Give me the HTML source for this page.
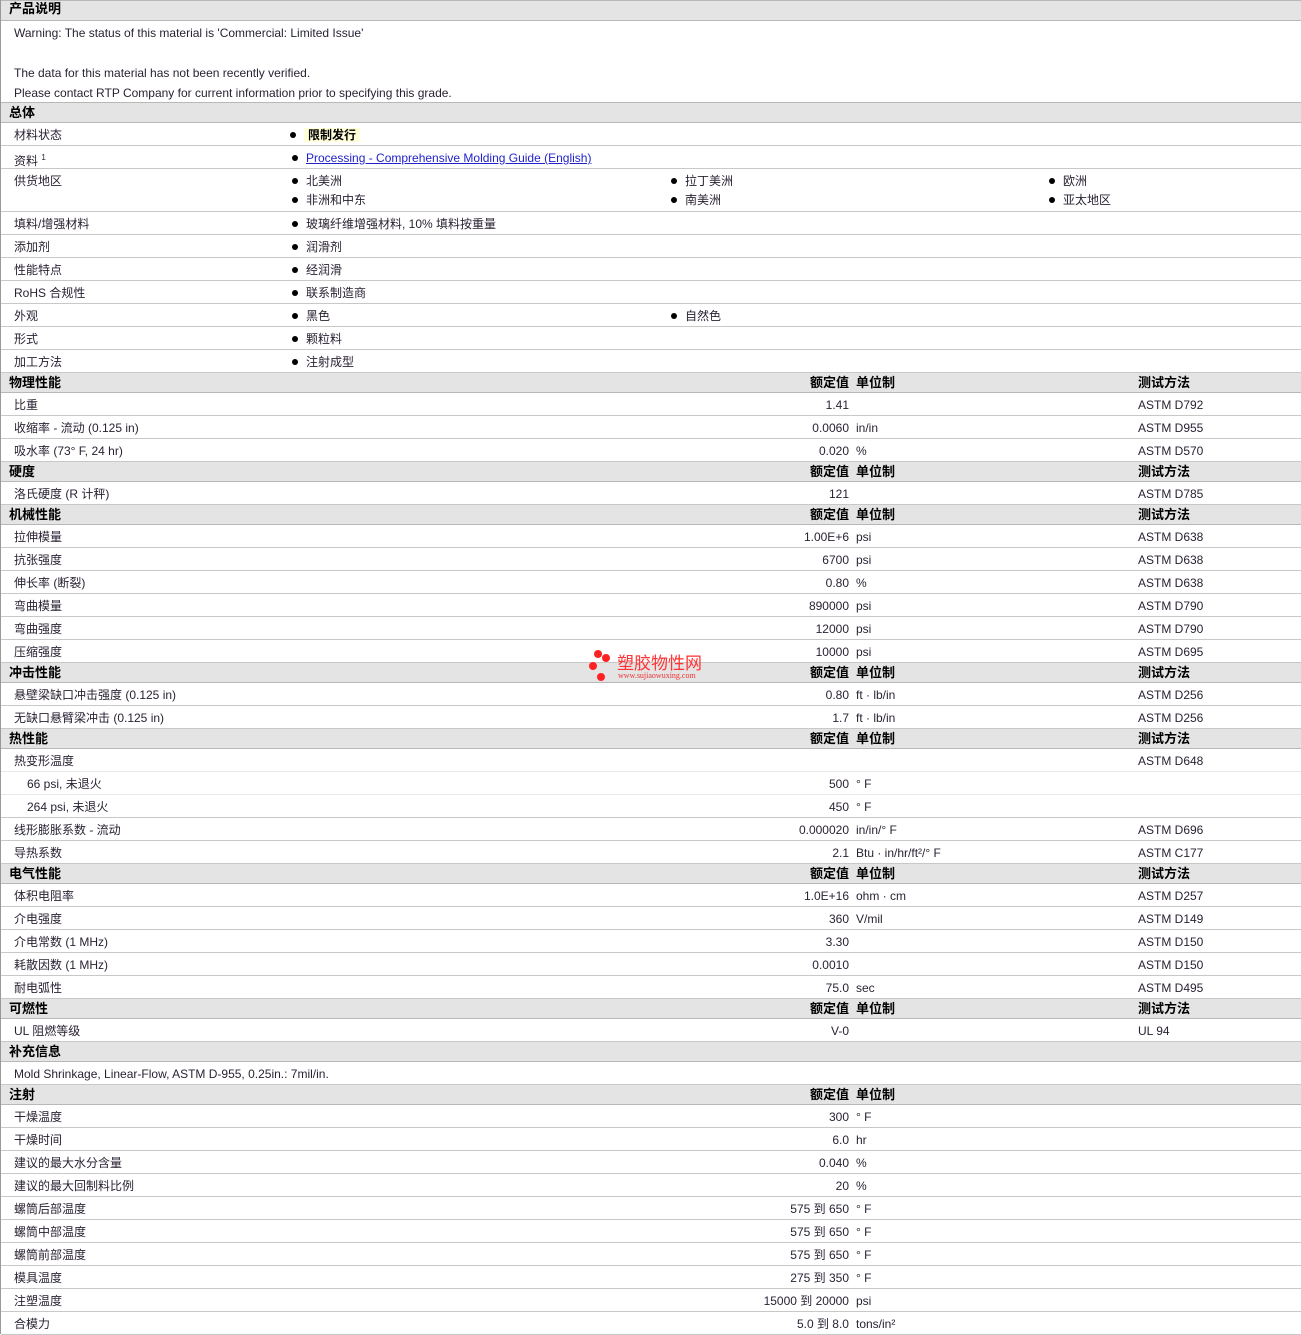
<!DOCTYPE html>
<html><head><meta charset="utf-8"><style>
*{margin:0;padding:0;box-sizing:border-box}
body{width:1301px;height:1334px;overflow:hidden;background:#fff;font-family:"Liberation Sans","Noto Sans CJK SC",sans-serif;font-size:12px;color:#2a2233;border-left:1px solid #999}
.h{height:20px;background:#e4e4e4;border-bottom:1px solid #b8b8b8;position:relative;font-weight:bold;font-size:13px;color:#000}
.r{height:23px;border-bottom:1px solid #c8c8c8;position:relative}
.r.s{border-bottom-color:#e8e8e8}
.h span,.r span{position:absolute;white-space:nowrap;line-height:14px}
.h span{top:3px}
.r span{top:5px}
.l{left:13px}.h .l{left:8px}
.b{left:290px}
.bt{left:305px}
.v{right:452px;text-align:right}
.u{left:855px}
.m{left:1137px}
.bl:before{content:"";position:absolute;left:-14px;top:4px;width:6px;height:6px;border-radius:50%;background:#000}
a{color:#2222cc;text-decoration:underline}
</style></head><body>
<div class="h" style="border-top:1px solid #b8b8b8;height:21px"><span class="l" style="top:1px">产品说明</span></div>
<div style="height:82px;position:relative;border-bottom:1px solid #b8b8b8">
<span style="position:absolute;left:13px;top:5px">Warning: The status of this material is 'Commercial: Limited Issue'</span>
<span style="position:absolute;left:13px;top:45px">The data for this material has not been recently verified.</span>
<span style="position:absolute;left:13px;top:65px">Please contact RTP Company for current information prior to specifying this grade.</span>
</div>
<div class="h"><span class="l">总体</span></div>
<div class="r"><span class="l">材料状态</span><span class="bt bl" style="background:#ffffd8;font-weight:bold;color:#000;padding:0 4px;left:303px">限制发行</span></div>
<div class="r"><span class="l">资料 <sup style="font-size:8px">1</sup></span><span class="bt bl"><a>Processing - Comprehensive Molding Guide (English)</a></span></div>
<div class="r" style="height:43px"><span class="l">供货地区</span><span class="bt bl">北美洲</span><span class="bt bl" style="top:24px">非洲和中东</span><span class="bl" style="left:684px">拉丁美洲</span><span class="bl" style="left:684px;top:24px">南美洲</span><span class="bl" style="left:1062px">欧洲</span><span class="bl" style="left:1062px;top:24px">亚太地区</span></div>
<div class="r"><span class="l">填料/增强材料</span><span class="bt bl">玻璃纤维增强材料, 10% 填料按重量</span></div>
<div class="r"><span class="l">添加剂</span><span class="bt bl">润滑剂</span></div>
<div class="r"><span class="l">性能特点</span><span class="bt bl">经润滑</span></div>
<div class="r"><span class="l">RoHS 合规性</span><span class="bt bl">联系制造商</span></div>
<div class="r"><span class="l">外观</span><span class="bt bl">黑色</span><span class="bl" style="left:684px">自然色</span></div>
<div class="r"><span class="l">形式</span><span class="bt bl">颗粒料</span></div>
<div class="r"><span class="l">加工方法</span><span class="bt bl">注射成型</span></div>

<div class="h"><span class="l">物理性能</span><span class="v">额定值</span><span class="u">单位制</span><span class="m">测试方法</span></div>
<div class="r"><span class="l">比重</span><span class="v">1.41</span><span class="m">ASTM D792</span></div>
<div class="r"><span class="l">收缩率 - 流动 (0.125 in)</span><span class="v">0.0060</span><span class="u">in/in</span><span class="m">ASTM D955</span></div>
<div class="r"><span class="l">吸水率 (73° F, 24 hr)</span><span class="v">0.020</span><span class="u">%</span><span class="m">ASTM D570</span></div>

<div class="h"><span class="l">硬度</span><span class="v">额定值</span><span class="u">单位制</span><span class="m">测试方法</span></div>
<div class="r"><span class="l">洛氏硬度 (R 计秤)</span><span class="v">121</span><span class="m">ASTM D785</span></div>

<div class="h"><span class="l">机械性能</span><span class="v">额定值</span><span class="u">单位制</span><span class="m">测试方法</span></div>
<div class="r"><span class="l">拉伸模量</span><span class="v">1.00E+6</span><span class="u">psi</span><span class="m">ASTM D638</span></div>
<div class="r"><span class="l">抗张强度</span><span class="v">6700</span><span class="u">psi</span><span class="m">ASTM D638</span></div>
<div class="r"><span class="l">伸长率 (断裂)</span><span class="v">0.80</span><span class="u">%</span><span class="m">ASTM D638</span></div>
<div class="r"><span class="l">弯曲模量</span><span class="v">890000</span><span class="u">psi</span><span class="m">ASTM D790</span></div>
<div class="r"><span class="l">弯曲强度</span><span class="v">12000</span><span class="u">psi</span><span class="m">ASTM D790</span></div>
<div class="r"><span class="l">压缩强度</span><span class="v">10000</span><span class="u">psi</span><span class="m">ASTM D695</span></div>

<div class="h"><span class="l">冲击性能</span><span class="v">额定值</span><span class="u">单位制</span><span class="m">测试方法</span></div>
<div class="r"><span class="l">悬壁梁缺口冲击强度 (0.125 in)</span><span class="v">0.80</span><span class="u">ft · lb/in</span><span class="m">ASTM D256</span></div>
<div class="r"><span class="l">无缺口悬臂梁冲击 (0.125 in)</span><span class="v">1.7</span><span class="u">ft · lb/in</span><span class="m">ASTM D256</span></div>

<div class="h"><span class="l">热性能</span><span class="v">额定值</span><span class="u">单位制</span><span class="m">测试方法</span></div>
<div class="r s"><span class="l">热变形温度</span><span class="m">ASTM D648</span></div>
<div class="r s"><span class="l" style="left:26px">66 psi, 未退火</span><span class="v">500</span><span class="u">° F</span></div>
<div class="r"><span class="l" style="left:26px">264 psi, 未退火</span><span class="v">450</span><span class="u">° F</span></div>
<div class="r"><span class="l">线形膨胀系数 - 流动</span><span class="v">0.000020</span><span class="u">in/in/° F</span><span class="m">ASTM D696</span></div>
<div class="r"><span class="l">导热系数</span><span class="v">2.1</span><span class="u">Btu · in/hr/ft²/° F</span><span class="m">ASTM C177</span></div>

<div class="h"><span class="l">电气性能</span><span class="v">额定值</span><span class="u">单位制</span><span class="m">测试方法</span></div>
<div class="r"><span class="l">体积电阻率</span><span class="v">1.0E+16</span><span class="u">ohm · cm</span><span class="m">ASTM D257</span></div>
<div class="r"><span class="l">介电强度</span><span class="v">360</span><span class="u">V/mil</span><span class="m">ASTM D149</span></div>
<div class="r"><span class="l">介电常数 (1 MHz)</span><span class="v">3.30</span><span class="m">ASTM D150</span></div>
<div class="r"><span class="l">耗散因数 (1 MHz)</span><span class="v">0.0010</span><span class="m">ASTM D150</span></div>
<div class="r"><span class="l">耐电弧性</span><span class="v">75.0</span><span class="u">sec</span><span class="m">ASTM D495</span></div>

<div class="h"><span class="l">可燃性</span><span class="v">额定值</span><span class="u">单位制</span><span class="m">测试方法</span></div>
<div class="r"><span class="l">UL 阻燃等级</span><span class="v">V-0</span><span class="m">UL 94</span></div>

<div class="h"><span class="l">补充信息</span></div>
<div class="r"><span class="l">Mold Shrinkage, Linear-Flow, ASTM D-955, 0.25in.: 7mil/in.</span></div>

<div class="h"><span class="l">注射</span><span class="v">额定值</span><span class="u">单位制</span></div>
<div class="r"><span class="l">干燥温度</span><span class="v">300</span><span class="u">° F</span></div>
<div class="r"><span class="l">干燥时间</span><span class="v">6.0</span><span class="u">hr</span></div>
<div class="r"><span class="l">建议的最大水分含量</span><span class="v">0.040</span><span class="u">%</span></div>
<div class="r"><span class="l">建议的最大回制料比例</span><span class="v">20</span><span class="u">%</span></div>
<div class="r"><span class="l">螺筒后部温度</span><span class="v">575 到 650</span><span class="u">° F</span></div>
<div class="r"><span class="l">螺筒中部温度</span><span class="v">575 到 650</span><span class="u">° F</span></div>
<div class="r"><span class="l">螺筒前部温度</span><span class="v">575 到 650</span><span class="u">° F</span></div>
<div class="r"><span class="l">模具温度</span><span class="v">275 到 350</span><span class="u">° F</span></div>
<div class="r"><span class="l">注塑温度</span><span class="v">15000 到 20000</span><span class="u">psi</span></div>
<div class="r"><span class="l">合模力</span><span class="v">5.0 到 8.0</span><span class="u">tons/in²</span></div>

<div style="position:absolute;left:589px;top:649px;width:130px;height:36px">
<div style="position:absolute;left:5px;top:1px;width:8px;height:8px;border-radius:50%;background:#f22"></div>
<div style="position:absolute;left:13px;top:5px;width:8px;height:8px;border-radius:50%;background:#f22"></div>
<div style="position:absolute;left:0;top:13px;width:8px;height:8px;border-radius:50%;background:#f22"></div>
<div style="position:absolute;left:8px;top:24px;width:8px;height:8px;border-radius:50%;background:#f22"></div>
<div style="position:absolute;left:28px;top:3px;font-size:17px;color:#f33;line-height:20px;font-family:'Noto Sans CJK SC',sans-serif">塑胶物性网</div>
<div style="position:absolute;left:29px;top:22px;font-size:8px;color:#e33;font-family:'Liberation Serif',serif">www.sujiaowuxing.com</div>
</div>
</body></html>
